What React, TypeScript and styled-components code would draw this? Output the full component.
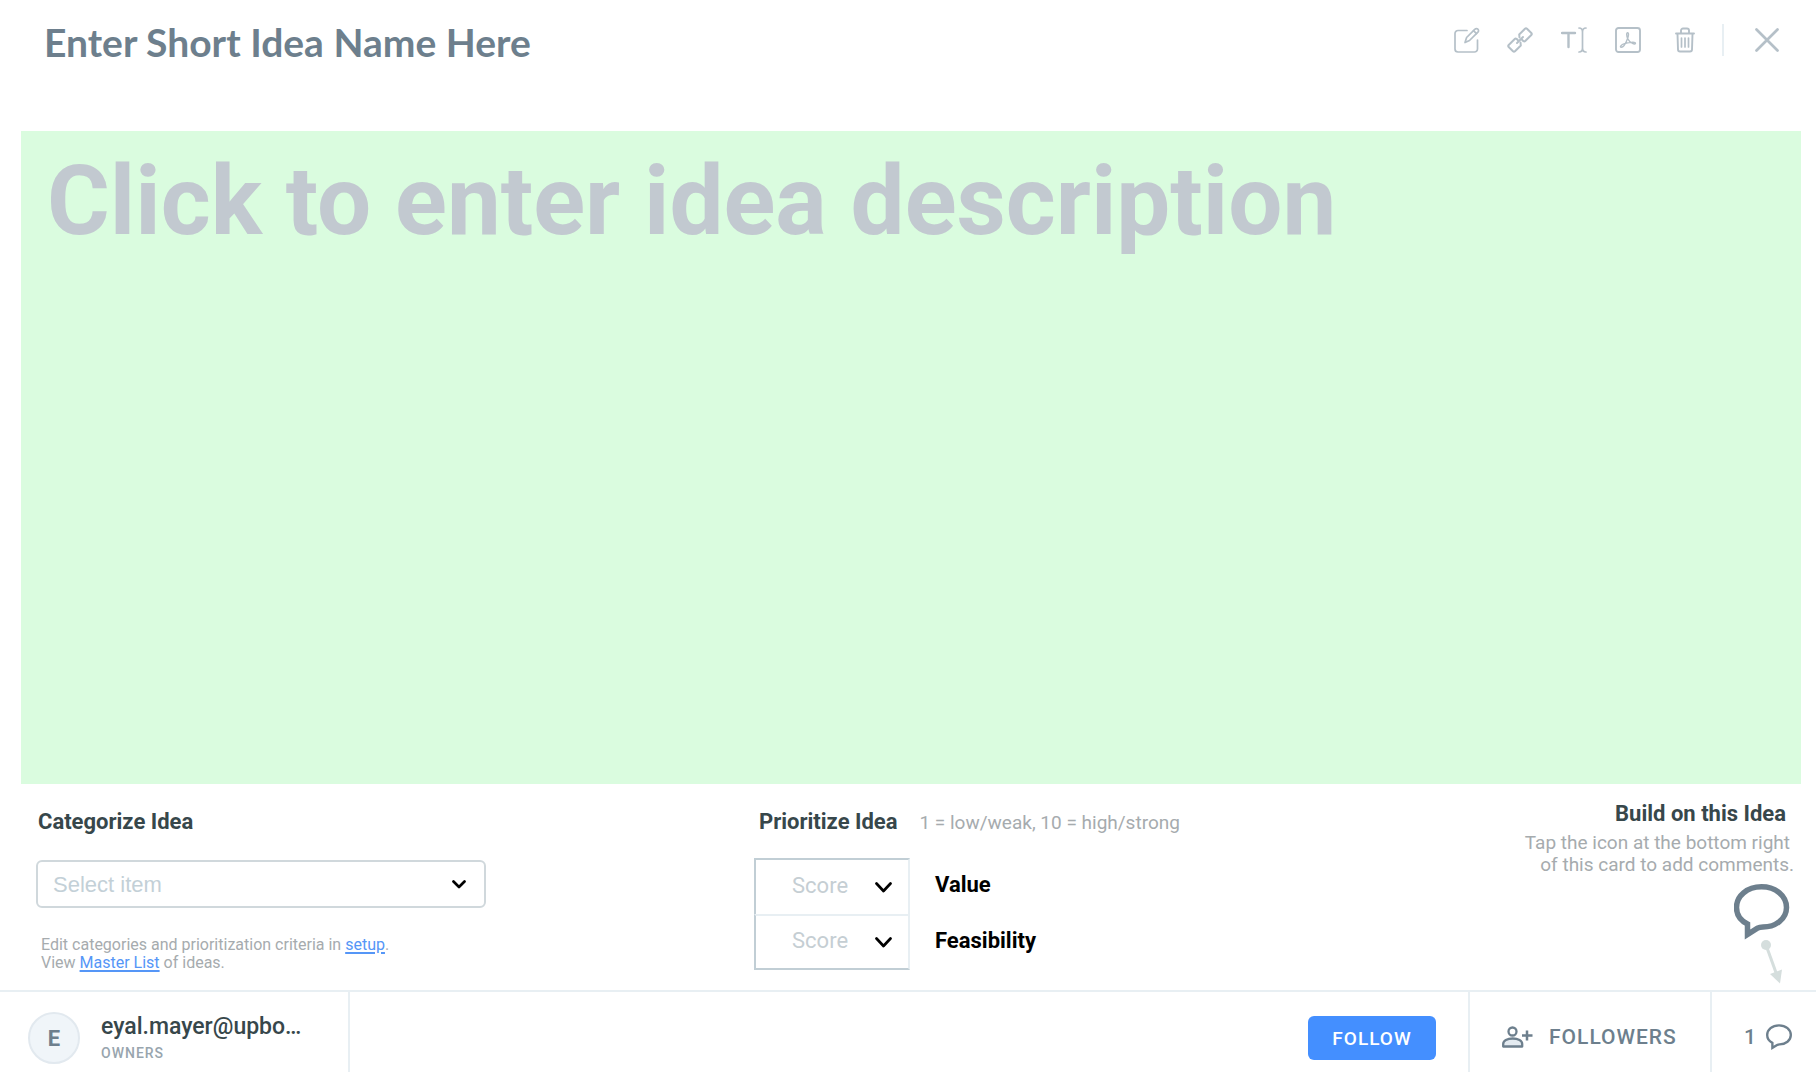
import React from "react";
import styled, { createGlobalStyle } from "styled-components";

const slate = "#6d7f8d";
const ink = "#37474b";
const muted = "#a6abae";
const line = "#e8eff3";
const iconGrey = "#b5c0c8";

const GlobalStyle = createGlobalStyle`
  *, *::before, *::after { box-sizing: border-box; }
  body { margin: 0; background: #fff; font-family: Roboto, "Liberation Sans", sans-serif; }
  button, select, textarea { font: inherit; margin: 0; }
  button { border: 0; background: none; padding: 0; cursor: pointer; }
  svg { display: block; }
`;

const Card = styled.main`
  display: flex;
  flex-direction: column;
  min-height: 100vh;
`;

const Header = styled.header`
  display: flex;
  justify-content: space-between;
  align-items: flex-start;
  height: 131px;
  padding: 16px 37px 0 44px;
`;

const Title = styled.h1`
  margin: 0;
  font: 700 39px/52px Lato, sans-serif;
  color: ${slate};
`;

const Toolbar = styled.div`
  display: flex;
  align-items: center;
  height: 48px;
`;

const ToolButton = styled.button<{ $gap: number }>`
  margin-left: ${(p) => p.$gap}px;
  color: ${iconGrey};
`;

const ToolDivider = styled.span`
  width: 2px;
  height: 32px;
  margin-left: 27px;
  background: ${line};
`;

const Description = styled.textarea`
  flex: 1;
  display: block;
  margin: 0 15px 0 21px;
  padding: 12px 26px;
  border: 0;
  outline: 0;
  resize: none;
  background: #dafcdf;
  font-size: 96px;
  font-weight: 700;
  line-height: 116px;
  color: ${ink};
  &::placeholder { color: #c2c9d0; opacity: 1; }
`;

const Panels = styled.section`
  display: grid;
  grid-template-columns: 754fr 700fr 362fr;
  height: 206px;
`;

const Categorize = styled.div`
  padding: 24px 0 0 36px;
`;

const Prioritize = styled.div`
  padding-top: 24px;
`;

const Build = styled.div`
  display: flex;
  flex-direction: column;
  align-items: flex-end;
  padding: 16px 22px 0 0;
`;

const Heading = styled.h2`
  margin: 0;
  font-size: 22px;
  line-height: 28px;
  font-weight: 700;
  color: ${ink};
`;

const CategoryHeading = styled(Heading)`
  padding-left: 2px;
`;

const BuildHeading = styled(Heading)`
  padding-right: 8px;
`;

const HeadingRow = styled.div`
  display: flex;
  align-items: baseline;
  gap: 22px;
  padding-left: 5px;
`;

const Hint = styled.p`
  margin: 0;
  font-size: 19px;
  line-height: 22px;
  color: ${muted};
`;

const BuildHint = styled(Hint)`
  margin-top: 4px;
  text-align: right;
  white-space: nowrap;
`;

const FirstLine = styled.span`
  display: block;
  padding-right: 4px;
`;

const SelectBox = styled.div`
  display: grid;
  align-items: center;
  & > * { grid-area: 1 / 1; }
  & > svg { justify-self: end; pointer-events: none; }
`;

const CategoryBox = styled(SelectBox)`
  width: 450px;
  margin-top: 24px;
  & > svg { margin-right: 20px; }
`;

const CategorySelect = styled.select`
  appearance: none;
  width: 100%;
  height: 48px;
  padding: 0 48px 0 15px;
  border: 2px solid #d0d8dc;
  border-radius: 6px;
  background: #fff;
  font-family: "Liberation Sans", sans-serif;
  font-size: 22px;
  color: #c3d0d7;
`;

const SetupNote = styled.p`
  margin: 28px 0 0 5px;
  font-size: 16px;
  line-height: 18px;
  color: ${muted};
`;

const NoteLink = styled.a`
  color: #5596f7;
  text-decoration: underline;
  text-decoration-thickness: 2px;
  text-underline-offset: 2px;
`;

const Scores = styled.div`
  margin-top: 22px;
`;

const ScoreRow = styled.div`
  display: flex;
  align-items: center;
  gap: 25px;
`;

const ScoreBox = styled(SelectBox)<{ $last?: boolean }>`
  width: 156px;
  height: 56px;
  border-style: solid;
  border-width: ${(p) => (p.$last ? "2px" : "2px 2px 0")};
  border-color: ${(p) => (p.$last ? line : "#c1ced5")} ${line} #c1ced5 #c1ced5;
  & > svg { margin-right: 16px; }
`;

const ScoreSelect = styled.select`
  appearance: none;
  width: 100%;
  height: 52px;
  padding: 0 48px 4px 36px;
  border: 0;
  background: transparent;
  font-size: 22px;
  color: #c5ced3;
`;

const ScoreLabel = styled.label`
  font-size: 22px;
  line-height: 28px;
  padding-bottom: 2px;
  font-weight: 700;
  color: #000;
`;

const Pointer = styled.div`
  padding-right: 4px;
  margin-top: 8px;
`;

const Footer = styled.footer`
  display: flex;
  height: 82px;
  border-top: 2px solid ${line};
`;

const Owner = styled.div`
  display: flex;
  align-items: center;
  gap: 21px;
  width: 350px;
  padding: 12px 40px 0 28px;
  border-right: 2px solid ${line};
`;

const Avatar = styled.span`
  flex: none;
  display: grid;
  place-items: center;
  width: 52px;
  height: 52px;
  border: 2px solid #e2e9ef;
  border-radius: 50%;
  background: #f0f5f9;
  font-size: 22px;
  font-weight: 700;
  color: ${slate};
`;

const OwnerText = styled.div`
  min-width: 0;
  padding-top: 2px;
`;

const OwnerName = styled.div`
  font-size: 23px;
  line-height: 28px;
  font-weight: 500;
  color: ${ink};
  white-space: nowrap;
`;

const OwnerRole = styled.div`
  font-size: 14px;
  line-height: 24px;
  font-weight: 500;
  letter-spacing: 1px;
  color: #98a5ae;
`;

const Actions = styled.div`
  display: flex;
  margin-left: auto;
`;

const FollowButton = styled.button`
  width: 128px;
  height: 44px;
  margin: 24px 32px 0 0;
  border-radius: 6px;
  background: #448fff;
  font-size: 19px;
  font-weight: 500;
  letter-spacing: 1px;
  color: #fff;
`;

const FooterButton = styled.button<{ $width: number; $gap: number; $tracking: number }>`
  display: flex;
  align-items: center;
  gap: ${(p) => p.$gap}px;
  width: ${(p) => p.$width}px;
  padding: 10px 0 0 32px;
  border-left: 2px solid ${line};
  font-size: 21px;
  font-weight: 500;
  letter-spacing: ${(p) => p.$tracking}px;
  color: ${slate};
`;

const EditIcon = () => (
  <svg width="26" height="26" viewBox="0 0 26 26" fill="none" stroke="currentColor" strokeWidth="1.700" strokeLinecap="round" strokeLinejoin="round">
    <path d="M13 3.500H4A3 3 0 0 0 1 6.500V22a3 3 0 0 0 3 3h16.500a3 3 0 0 0 3-3V13" />
    <path d="M11 15.500l1.600-5L21 2.200a2 2 0 0 1 2.900 0 2 2 0 0 1 0 2.900L15.500 13.500z" />
    <path d="M19.500 3.700l3 3" />
  </svg>
);

const LinkIcon = () => (
  <svg width="26" height="26" viewBox="0 0 26 26" fill="none" stroke="currentColor" strokeWidth="2" strokeLinejoin="round" strokeLinecap="round">
    <path d="M12.500 10.500L12.200 7.500 18 1.700q1-1 2 0l4.300 4.300q1 1 0 2L18.500 13.800q-1 1-2 .400l-1.500-1.500" />
    <path d="M13.500 15.500l.300 3L8 24.300q-1 1-2 0L1.700 20q-1-1 0-2L7.500 12.200q1-1 2-.400l1.500 1.500" />
    <path d="M10 16l6-6" />
  </svg>
);

const TextIcon = () => (
  <svg width="26" height="26" viewBox="0 0 26 26" fill="none" stroke="currentColor" strokeLinecap="round">
    <path d="M1 6h13M7.500 6v14" strokeWidth="2.400" />
    <path d="M18 1q3.500 0 3.500 4v16q0 4-3.500 4M25 1q-3.500 0-3.500 4v16q0 4 3.500 4" strokeWidth="1.700" />
  </svg>
);

const PdfIcon = () => (
  <svg width="26" height="26" viewBox="0 0 26 26" fill="none" stroke="currentColor" strokeLinejoin="round">
    <rect x="1" y="1" width="24" height="24" rx="2.500" strokeWidth="1.900" />
    <path
      d="M12.600 11.500C11.500 8.500 11.300 5.800 12.600 5.800S13.700 8.500 12.600 11.500C11.300 15 9 20.300 6.300 20.300 4.300 20.300 6 17.600 9.500 16.600 12.500 15.700 20.500 14.300 20.500 16.200 20.500 18 15 16.500 12.600 11.500z"
      strokeWidth="1.400"
    />
  </svg>
);

const TrashIcon = () => (
  <svg width="20" height="26" viewBox="0 0 20 26" fill="none" stroke="currentColor" strokeWidth="1.900" strokeLinejoin="round" strokeLinecap="round">
    <path d="M1 6.500h18M6 6V3.500a2 2 0 0 1 2-2h4a2 2 0 0 1 2 2V6M2.500 7l.500 15.500a2 2 0 0 0 2 2h10a2 2 0 0 0 2-2L17.500 7" />
    <path d="M6.500 11v9M10 11v9M13.500 11v9" strokeWidth="1.700" />
  </svg>
);

const CloseIcon = () => (
  <svg width="24" height="24" viewBox="0 0 24 24" fill="none" stroke="currentColor" strokeWidth="2.700" strokeLinecap="round">
    <path d="M1.500 1.500l21 21M22.500 1.500l-21 21" />
  </svg>
);

const Chevron = ({ width, height }: { width: number; height: number }) => (
  <svg width={width} height={height} viewBox={`0 0 ${width} ${height}`} fill="none" stroke="#000" strokeWidth="2.700" strokeLinecap="round" strokeLinejoin="round">
    <path d={`M1.500 1.500L${width / 2} ${height - 2}L${width - 1.5} 1.500`} />
  </svg>
);

const BubbleShape = ({ weight }: { weight: number }) => (
  <path
    d="M27.500 2.800C42 2.800 52.500 12 52.500 23.500S41.500 43 29 43c-2.500 0-4 .300-5.500 1.200L13.500 50.500V40C6.500 36.500 2.500 30.500 2.500 23.500 2.500 12 13 2.800 27.500 2.800z"
    fill="none"
    stroke={slate}
    strokeWidth={weight}
  />
);

const CommentPointer = () => (
  <svg width="56" height="101" viewBox="0 0 56 101">
    <BubbleShape weight={5.5} />
    <circle cx="32" cy="61" r="5" fill="#d5dedd" />
    <path d="M32 61l10.500 29" stroke="#d5dedd" strokeWidth="3" />
    <path d="M36 90l12-4.500L46 99.500z" fill="#d5dedd" />
  </svg>
);

const CommentIcon = () => (
  <svg width="26" height="26" viewBox="0 0 55 55">
    <BubbleShape weight={5} />
  </svg>
);

const PersonAddIcon = () => (
  <svg width="31" height="22" viewBox="0 0 31 22" fill="none" stroke={slate} strokeWidth="2.300">
    <circle cx="10.500" cy="5.500" r="4" />
    <path d="M1.200 20.500v-2.500c0-3.300 4-5.500 9.500-5.500s9.500 2.200 9.500 5.500v2.500z" fill="#e4ebf1" strokeLinejoin="round" />
    <path d="M25 4.500v10M20 9.500h10.500" strokeWidth="2.500" />
  </svg>
);

const tools = [
  { label: "Edit", icon: <EditIcon />, gap: 0 },
  { label: "Copy link", icon: <LinkIcon />, gap: 27 },
  { label: "Text size", icon: <TextIcon />, gap: 28 },
  { label: "Export PDF", icon: <PdfIcon />, gap: 28 },
  { label: "Delete", icon: <TrashIcon />, gap: 34 },
];

const criteria = ["Value", "Feasibility"];

export default function App() {
  return (
    <>
      <GlobalStyle />
      <Card>
        <Header>
          <Title>Enter Short Idea Name Here</Title>
          <Toolbar>
            {tools.map((t) => (
              <ToolButton key={t.label} type="button" aria-label={t.label} $gap={t.gap}>
                {t.icon}
              </ToolButton>
            ))}
            <ToolDivider />
            <ToolButton type="button" aria-label="Close" $gap={31}>
              <CloseIcon />
            </ToolButton>
          </Toolbar>
        </Header>

        <Description aria-label="Idea description" placeholder="Click to enter idea description" />

        <Panels>
          <Categorize>
            <CategoryHeading>
              <label htmlFor="category">Categorize Idea</label>
            </CategoryHeading>
            <CategoryBox>
              <CategorySelect id="category" defaultValue="">
                <option value="">Select item</option>
              </CategorySelect>
              <Chevron width={14} height={9} />
            </CategoryBox>
            <SetupNote>
              Edit categories and prioritization criteria in <NoteLink href="#setup">setup</NoteLink>.
              <br />
              View <NoteLink href="#master-list">Master List</NoteLink> of ideas.
            </SetupNote>
          </Categorize>

          <Prioritize>
            <HeadingRow>
              <Heading>Prioritize Idea</Heading>
              <Hint>1 = low/weak, 10 = high/strong</Hint>
            </HeadingRow>
            <Scores>
              {criteria.map((name, i) => (
                <ScoreRow key={name}>
                  <ScoreBox $last={i === criteria.length - 1}>
                    <ScoreSelect id={`score-${name}`} defaultValue="">
                      <option value="">Score</option>
                    </ScoreSelect>
                    <Chevron width={17} height={11} />
                  </ScoreBox>
                  <ScoreLabel htmlFor={`score-${name}`}>{name}</ScoreLabel>
                </ScoreRow>
              ))}
            </Scores>
          </Prioritize>

          <Build>
            <BuildHeading>Build on this Idea</BuildHeading>
            <BuildHint>
              <FirstLine>Tap the icon at the bottom right</FirstLine>
              of this card to add comments.
            </BuildHint>
            <Pointer>
              <CommentPointer />
            </Pointer>
          </Build>
        </Panels>

        <Footer>
          <Owner>
            <Avatar>E</Avatar>
            <OwnerText>
              <OwnerName>eyal.mayer@upbo…</OwnerName>
              <OwnerRole>OWNERS</OwnerRole>
            </OwnerText>
          </Owner>
          <Actions>
            <FollowButton type="button">FOLLOW</FollowButton>
            <FooterButton type="button" $width={242} $gap={16} $tracking={1}>
              <PersonAddIcon />
              FOLLOWERS
            </FooterButton>
            <FooterButton type="button" aria-label="1 comment" $width={106} $gap={10} $tracking={0}>
              1
              <CommentIcon />
            </FooterButton>
          </Actions>
        </Footer>
      </Card>
    </>
  );
}
